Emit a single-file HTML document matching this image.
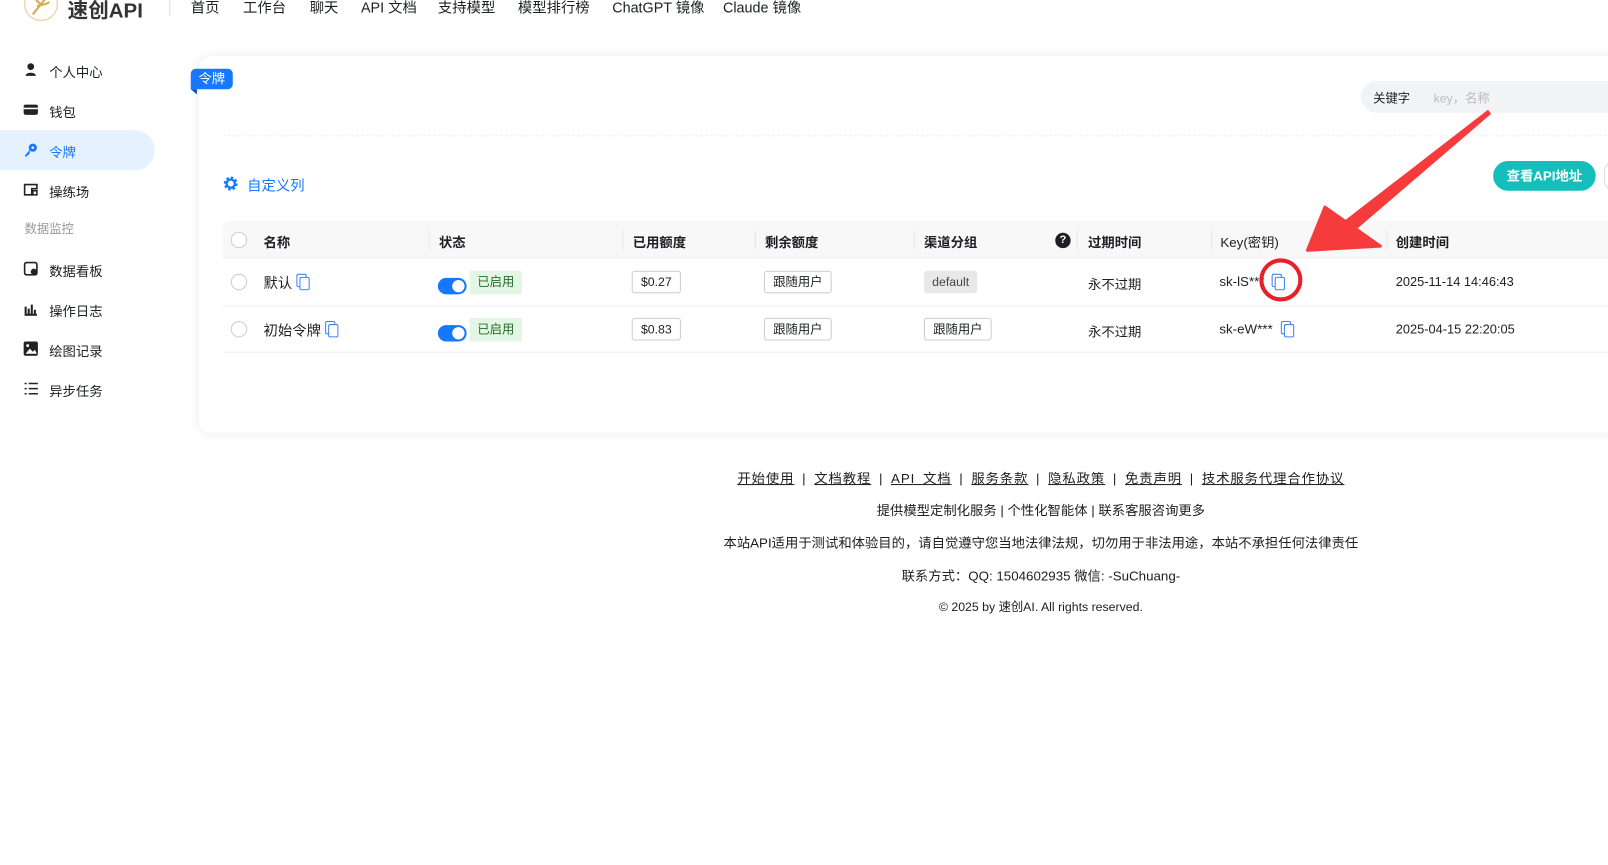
<!DOCTYPE html>
<html><head><meta charset="utf-8"><style>
*{margin:0;padding:0;box-sizing:border-box}
body{width:1608px;height:843px;overflow:hidden;background:#fff;font-family:"Liberation Sans","Noto Sans CJK SC",sans-serif;color:#1c1f23;position:relative;font-size:14px}
#w{position:absolute;left:0;top:0;width:1568px;height:822px;transform:scale(1.0255);transform-origin:0 0}
.a{position:absolute;white-space:nowrap}
.nav{top:-3px;font-size:14px;color:#1c1f23}
.side{left:48px;font-size:13px}
.ic{position:absolute;left:23px;width:14px;height:14px}
.th{top:226px;font-size:13px;font-weight:bold}
.sep{position:absolute;top:224px;width:1px;height:20px;background:#e8e8e8}
.cb{position:absolute;left:225px;width:16px;height:16px;border:1px solid #ccc;border-radius:50%;background:#fff}
.tag{position:absolute;height:22px;border:1px solid #ccc;border-radius:3px;font-size:12px;line-height:20px;padding:0 8px;background:#fff}
.sw{position:absolute;left:427px;width:28px;height:16px;border-radius:8px;background:#1677ff}
.sw:after{content:"";position:absolute;right:2px;top:2px;width:12px;height:12px;border-radius:50%;background:#fff}
.ok{position:absolute;left:458px;width:51px;height:23px;background:#e3f5e3;color:#236b2a;font-size:12px;line-height:23px;text-align:center;border-radius:2px}
.cp{position:absolute;width:12px;height:14px}
.cp:before{content:"";position:absolute;left:0;top:0;width:8px;height:11px;border:1.6px solid #3b82f6;border-radius:2px}
.cp:after{content:"";position:absolute;left:3px;top:3px;width:8px;height:11px;border:1.6px solid #3b82f6;border-radius:2px;background:#fff}
.foot{left:0;width:2030px;text-align:center;font-size:13px}
.foot a{color:#1c1f23}
</style></head><body><div id="w">
<!-- header -->
<svg class="a" style="left:22px;top:-14px" width="36" height="36" viewBox="0 0 36 36"><circle cx="18" cy="18" r="16" fill="#fff" stroke="#ecd9b0" stroke-width="1.5"/><path d="M10 28 L26 8 M14 20 l8 -2 M12 12 q6 10 14 4" stroke="#d9a94e" stroke-width="2" fill="none"/></svg>
<div class="a" style="left:66px;top:-6px;font-size:20px;font-weight:bold;color:#333">速创API</div>
<div class="a" style="left:165px;top:0;width:1px;height:16px;background:#e0e0e0"></div>
<div class="a nav" style="left:186px">首页</div>
<div class="a nav" style="left:237px">工作台</div>
<div class="a nav" style="left:302px">聊天</div>
<div class="a nav" style="left:352px">API 文档</div>
<div class="a nav" style="left:427px">支持模型</div>
<div class="a nav" style="left:505px">模型排行榜</div>
<div class="a nav" style="left:597px">ChatGPT 镜像</div>
<div class="a nav" style="left:705px">Claude 镜像</div>
<!-- sidebar -->
<div class="a" style="left:0;top:127px;width:151px;height:39px;background:#e6f1fe;border-radius:0 20px 20px 0"></div>
<svg class="ic" style="top:61px" viewBox="0 0 14 14"><circle cx="7" cy="4" r="3.3" fill="#222"/><path d="M2 13c0-4 10-4 10 0z" fill="#222"/></svg>
<div class="a side" style="top:60px">个人中心</div>
<svg class="ic" style="top:100px" viewBox="0 0 14 14"><rect x="0" y="2" width="14" height="10" rx="2" fill="#222"/><rect x="0" y="5" width="14" height="1.5" fill="#fff"/></svg>
<div class="a side" style="top:99px">钱包</div>
<svg class="ic" style="top:139px" viewBox="0 0 14 14"><circle cx="9" cy="5" r="4" fill="#1677ff"/><circle cx="9" cy="5" r="1.3" fill="#e6f1fe"/><path d="M6 7L1 13l2 1 1-2 1 0 1-2z" fill="#1677ff"/></svg>
<div class="a side" style="top:138px;color:#1677ff">令牌</div>
<svg class="ic" style="top:178px" viewBox="0 0 14 14"><path d="M1 2h12v4H8v6H1z" fill="none" stroke="#222" stroke-width="1.6"/><rect x="9" y="8" width="4" height="4" fill="none" stroke="#222" stroke-width="1.5"/></svg>
<div class="a side" style="top:177px">操练场</div>
<div class="a" style="left:24px;top:214px;font-size:12px;color:#999">数据监控</div>
<svg class="ic" style="top:255px" viewBox="0 0 14 14"><rect x="1" y="1" width="12" height="12" rx="2" fill="none" stroke="#222" stroke-width="1.6"/><circle cx="10" cy="10" r="3" fill="#222"/></svg>
<div class="a side" style="top:254px">数据看板</div>
<svg class="ic" style="top:294px" viewBox="0 0 14 14"><path d="M1 13h12M2 5v7M5 7v5M8 3v9M11 8v4" stroke="#222" stroke-width="2"/></svg>
<div class="a side" style="top:293px">操作日志</div>
<svg class="ic" style="top:333px" viewBox="0 0 14 14"><rect x="0" y="0" width="14" height="14" rx="2" fill="#222"/><path d="M2 12l4-5 3 3 2-2 2 4z" fill="#fff"/><circle cx="4" cy="4" r="1.4" fill="#fff"/></svg>
<div class="a side" style="top:332px">绘图记录</div>
<svg class="ic" style="top:372px" viewBox="0 0 14 14"><path d="M5 2h9M5 7h9M5 12h9M1 2h2M1 7h2M1 12h2" stroke="#222" stroke-width="1.5"/></svg>
<div class="a side" style="top:371px">异步任务</div>
<!-- card -->
<div class="a" style="left:194px;top:55px;width:1440px;height:367px;background:#fff;border-radius:12px;box-shadow:0 0 12px rgba(0,0,0,.08)"></div>
<div class="a" style="left:186px;top:67px;width:41px;height:20px;background:#1677ff;color:#fff;border-radius:5px 5px 5px 0;font-size:13px;line-height:20px;text-align:center">令牌</div>
<div class="a" style="left:186px;top:87px;border-top:5px solid #0b4fb0;border-left:6px solid transparent"></div>
<div class="a" style="left:1327px;top:79px;width:300px;height:31px;background:#f2f3f5;border-radius:16px"></div>
<div class="a" style="left:1339px;top:87px;font-size:12px">关键字</div>
<div class="a" style="left:1398px;top:87px;font-size:12px;color:#bbb">key，名称</div>
<div class="a" style="left:217px;top:132px;width:1400px;border-top:1px dashed #eee"></div>
<svg class="a" style="left:218px;top:172px" width="14" height="14" viewBox="0 0 14 14"><circle cx="7" cy="7" r="5" fill="none" stroke="#1677ff" stroke-width="3.5" stroke-dasharray="2.2 1.7"/><circle cx="7" cy="7" r="4" fill="none" stroke="#1677ff" stroke-width="2.2"/></svg>
<div class="a" style="left:241px;top:171px;font-size:14px;color:#1677ff">自定义列</div>
<div class="a" style="left:1456px;top:157px;width:100px;height:29px;border-radius:15px;background:#14bfbb;color:#fff;font-size:13px;font-weight:bold;line-height:29px;text-align:center">查看API地址</div>
<div class="a" style="left:1564px;top:157px;width:20px;height:29px;border-radius:15px;border:1px solid #ddd"></div>
<!-- table -->
<div class="a" style="left:217px;top:215px;width:1400px;height:37px;background:#f8f8f8;border-radius:8px 0 0 0;border-bottom:1px solid #eee"></div>
<div class="cb" style="top:226px"></div>
<div class="a th" style="left:257px">名称</div>
<div class="sep" style="left:418px"></div>
<div class="a th" style="left:428px">状态</div>
<div class="sep" style="left:607px"></div>
<div class="a th" style="left:617px">已用额度</div>
<div class="sep" style="left:736px"></div>
<div class="a th" style="left:746px">剩余额度</div>
<div class="sep" style="left:891px"></div>
<div class="a th" style="left:901px">渠道分组</div>
<div class="a" style="left:1029px;top:227px;width:15px;height:15px;border-radius:50%;background:#1c1f23;color:#fff;font-size:11px;font-weight:bold;text-align:center;line-height:15px">?</div>
<div class="sep" style="left:1050px"></div>
<div class="a th" style="left:1061px">过期时间</div>
<div class="sep" style="left:1181px"></div>
<div class="a th" style="left:1190px;font-weight:normal">Key(密钥)</div>
<div class="sep" style="left:1352px"></div>
<div class="a th" style="left:1361px">创建时间</div>
<div class="a" style="left:217px;top:298px;width:1400px;height:1px;background:#eee"></div>
<div class="a" style="left:217px;top:343px;width:1400px;height:1px;background:#eee"></div>
<!-- row 1 -->
<div class="cb" style="top:267px"></div>
<div class="a" style="left:257px;top:266px;font-size:14px">默认</div>
<div class="cp" style="left:289px;top:267px"></div>
<div class="sw" style="top:271px"></div>
<div class="ok" style="top:264px">已启用</div>
<div class="tag" style="left:616px;top:264px">$0.27</div>
<div class="tag" style="left:745px;top:264px">跟随用户</div>
<div class="a" style="left:901px;top:264px;height:22px;padding:0 8px;background:#e8e8e8;font-size:12px;line-height:22px;border-radius:3px;color:#444">default</div>
<div class="a" style="left:1061px;top:267px;font-size:13px">永不过期</div>
<div class="a" style="left:1189px;top:267px;font-size:13px">sk-lS***</div>
<div class="cp" style="left:1240px;top:267px"></div>
<div class="a" style="left:1361px;top:268px;font-size:12.5px">2025-11-14 14:46:43</div>
<!-- row 2 -->
<div class="cb" style="top:313px"></div>
<div class="a" style="left:257px;top:312px;font-size:14px">初始令牌</div>
<div class="cp" style="left:317px;top:313px"></div>
<div class="sw" style="top:317px"></div>
<div class="ok" style="top:310px">已启用</div>
<div class="tag" style="left:616px;top:310px">$0.83</div>
<div class="tag" style="left:745px;top:310px">跟随用户</div>
<div class="tag" style="left:901px;top:310px">跟随用户</div>
<div class="a" style="left:1061px;top:313px;font-size:13px">永不过期</div>
<div class="a" style="left:1189px;top:313px;font-size:13px">sk-eW***</div>
<div class="cp" style="left:1249px;top:313px"></div>
<div class="a" style="left:1361px;top:314px;font-size:12.5px">2025-04-15 22:20:05</div>
<!-- annotation -->
<svg class="a" style="left:0;top:0" width="1608" height="843">
<path d="M1451 107 L1454 111 L1320 226 L1310 216 Z" fill="#f53b3b"/>
<path d="M1275 244 L1292 202 L1346 240 Z" fill="#f53b3b" stroke="#f53b3b" stroke-width="3" stroke-linejoin="round"/>
<circle cx="1249" cy="273" r="19" fill="none" stroke="#e8202a" stroke-width="4"/>
</svg>
<!-- footer -->
<div class="a foot" style="top:456px;letter-spacing:0.9px;word-spacing:3px"><a style="text-decoration:underline">开始使用</a> |  <a style="text-decoration:underline">文档教程</a>  | <a style="text-decoration:underline">API 文档</a> |  <a style="text-decoration:underline">服务条款</a> |  <a style="text-decoration:underline">隐私政策</a> |  <a style="text-decoration:underline">免责声明</a>  | <a style="text-decoration:underline">技术服务代理合作协议</a></div>
<div class="a foot" style="top:487px">提供模型定制化服务 | 个性化智能体 | 联系客服咨询更多</div>
<div class="a foot" style="top:519px">本站API适用于测试和体验目的，请自觉遵守您当地法律法规，切勿用于非法用途，本站不承担任何法律责任</div>
<div class="a foot" style="top:551px">联系方式：QQ: 1504602935 微信: -SuChuang-</div>
<div class="a foot" style="top:583px;font-size:12px">© 2025 by 速创AI. All rights reserved.</div>
</div></body></html>
